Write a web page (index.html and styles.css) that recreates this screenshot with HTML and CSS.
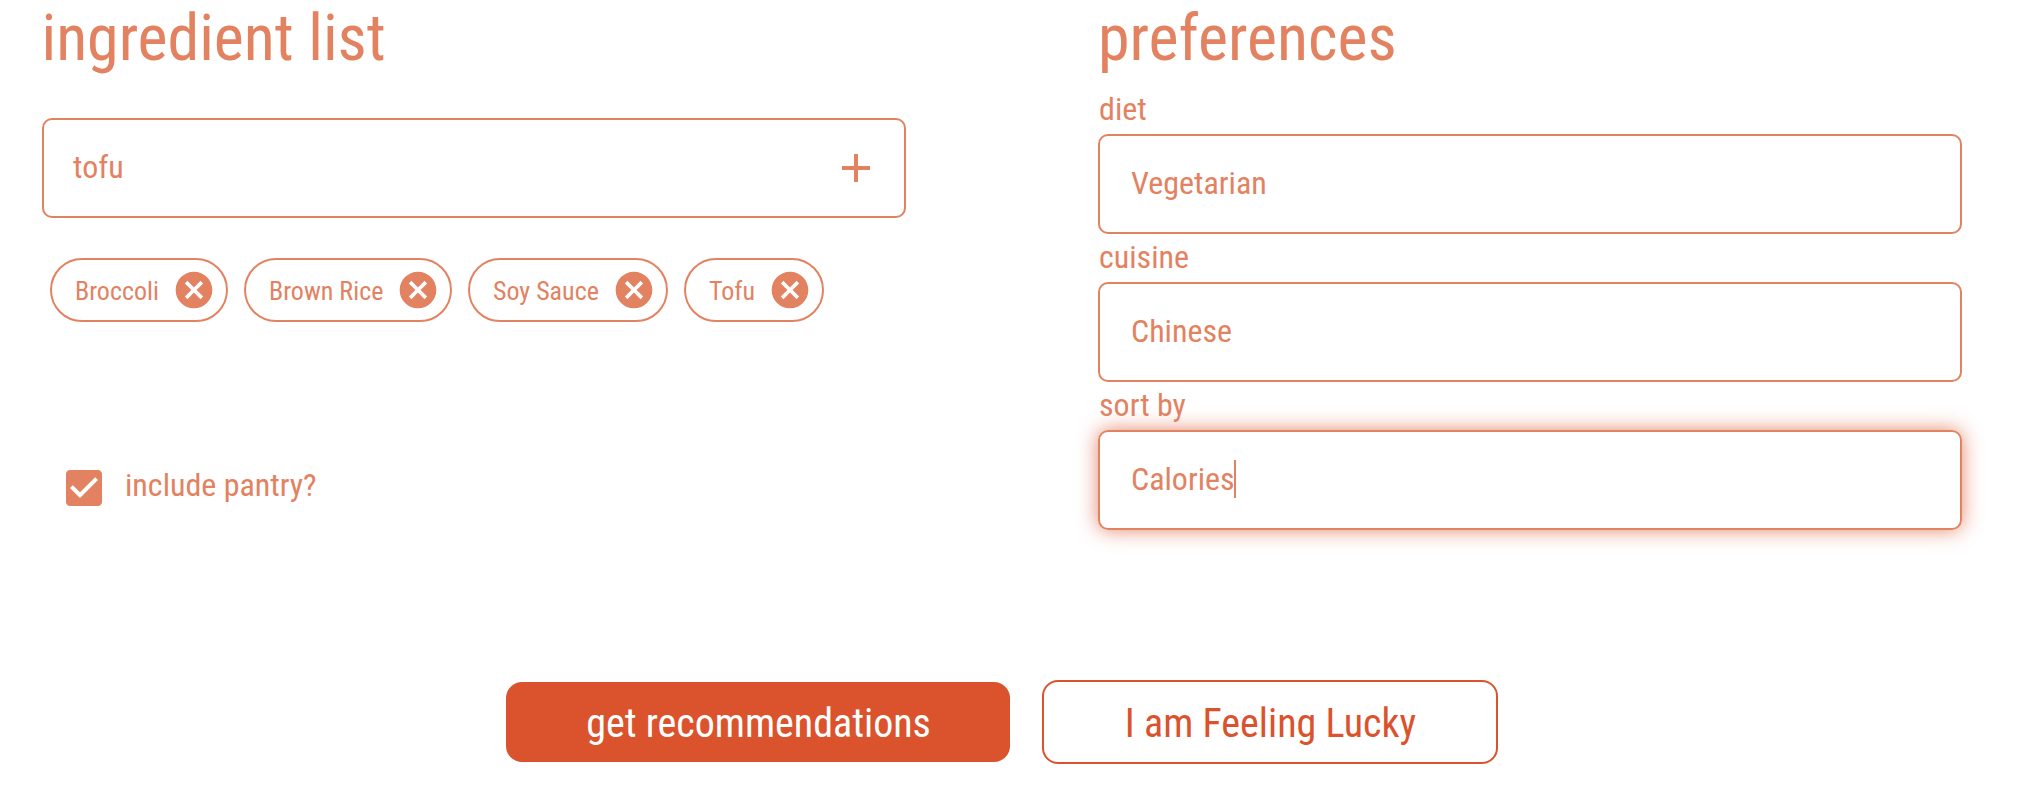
FILE: index.html
```html
<!DOCTYPE html>
<html lang="en">
<head>
<meta charset="utf-8">
<title>Ingredient list</title>
<link rel="stylesheet" href="styles.css">
</head>
<body>
<svg class="defs" aria-hidden="true">
  <symbol id="cancel" viewBox="0 0 24 24"><path d="M12 2C6.47 2 2 6.47 2 12s4.47 10 10 10 10-4.47 10-10S17.53 2 12 2zm5 13.59L15.59 17 12 13.41 8.41 17 7 15.59 10.59 12 7 8.41 8.41 7 12 10.59 15.59 7 17 8.41 13.41 12 17 15.59z"/></symbol>
</svg>
<main class="page">
  <div class="columns">
    <section class="ingredients">
      <h1 class="title">ingredient list</h1>
      <div class="field field-add">
        <span class="value">tofu</span>
        <svg class="icon-add" viewBox="0 0 24 24"><path d="M19 13h-6v6h-2v-6H5v-2h6V5h2v6h6v2z"/></svg>
      </div>
      <div class="chips">
        <div class="chip chip-broccoli"><span class="chip-label">Broccoli</span><svg class="icon-cancel"><use href="#cancel"/></svg></div>
        <div class="chip chip-rice"><span class="chip-label">Brown Rice</span><svg class="icon-cancel"><use href="#cancel"/></svg></div>
        <div class="chip chip-soy"><span class="chip-label">Soy Sauce</span><svg class="icon-cancel"><use href="#cancel"/></svg></div>
        <div class="chip chip-tofu"><span class="chip-label">Tofu</span><svg class="icon-cancel"><use href="#cancel"/></svg></div>
      </div>
      <div class="pantry">
        <svg class="icon-check" viewBox="0 0 24 24"><path d="M19 3H5c-1.11 0-2 .9-2 2v14c0 1.1.89 2 2 2h14c1.11 0 2-.9 2-2V5c0-1.1-.89-2-2-2zm-9 14l-5-5 1.41-1.41L10 14.17l7.59-7.59L19 8l-9 9z"/></svg>
        <span class="pantry-label">include pantry?</span>
      </div>
    </section>
    <section class="preferences">
      <h1 class="title">preferences</h1>
      <div class="label">diet</div>
      <div class="field"><span class="value">Vegetarian</span></div>
      <div class="label">cuisine</div>
      <div class="field"><span class="value">Chinese</span></div>
      <div class="label">sort by</div>
      <div class="field focused"><span class="value">Calories</span><span class="caret"></span></div>
    </section>
  </div>
  <div class="actions">
    <button class="btn btn-primary">get recommendations</button>
    <button class="btn btn-outline">I am Feeling Lucky</button>
  </div>
</main>
</body>
</html>
```
FILE: styles.css
```css
* { box-sizing: border-box; }
body {
  margin: 0;
  background: #fff;
  color: #e28261;
  font-family: "Roboto Condensed", Roboto, sans-serif;
  font-stretch: 75%;
  overflow: hidden;
}
svg { fill: currentColor; flex: none; display: block; }
.defs { width: 0; height: 0; position: absolute; }
.page { height: 788px; }
.columns { display: flex; height: 680px; padding-left: 42px; gap: 192px; }
.ingredients, .preferences { width: 864px; flex: none; }
.title { margin: 0; height: 86px; line-height: 78px; font-size: 64px; font-weight: 400; }
.ingredients .title { margin-left: -0.5px; letter-spacing: -0.04px; }
.field {
  display: flex;
  align-items: center;
  height: 100px;
  padding: 0 31px;
  border: 2px solid #e28261;
  border-radius: 10px;
  font-size: 32px;
}
.value { padding-bottom: 2px; }
.field-add { margin-top: 32px; padding: 0 24px 0 29px; justify-content: space-between; }
.label { height: 48px; line-height: 46px; font-size: 32px; padding-left: 1px; }
.icon-add { width: 48px; height: 48px; }
.focused { box-shadow: 0 0 20px rgba(218, 83, 44, .7); }
.caret { width: 2px; height: 38px; margin: 0 0 2px -1px; background: #e28261; }
.chips { display: flex; gap: 16px; padding-left: 8px; margin-top: 40px; }
.chip {
  display: flex;
  align-items: center;
  justify-content: space-between;
  height: 64px;
  padding: 0 10px 0 23px;
  border: 2px solid #e28261;
  border-radius: 32px;
  font-size: 26px;
}
.chip-broccoli { width: 178px; }
.chip-rice { width: 208px; }
.chip-soy { width: 200px; }
.chip-tofu { width: 140px; }
.chip-label { white-space: nowrap; padding-top: 2px; }
.icon-cancel { width: 44px; height: 44px; }
.pantry { display: flex; align-items: center; gap: 17px; margin: 142px 0 0 18px; }
.icon-check { width: 48px; height: 48px; }
.pantry-label { font-size: 32px; padding-bottom: 6px; }
.actions { display: flex; align-items: center; gap: 32px; padding-left: 506px; }
.btn { font: inherit; font-size: 40px; border-radius: 16px; padding: 2px 0 0 1px; }
.btn-primary { width: 504px; height: 80px; background: #da532c; color: #fff; border: 0; }
.btn-outline { width: 456px; height: 84px; background: #fff; color: #da532c; border: 2px solid #da532c; }
```
